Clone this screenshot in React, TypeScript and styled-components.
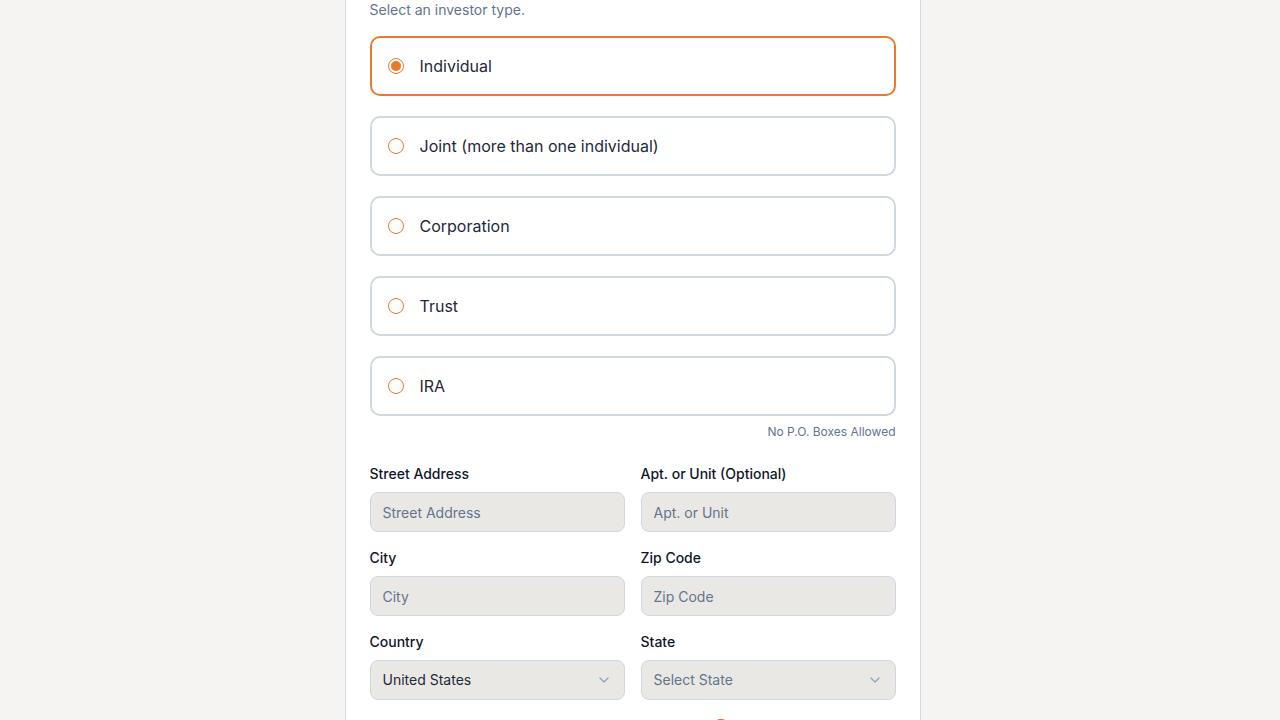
import React, { useState } from 'react';
import styled, { createGlobalStyle } from 'styled-components';
import { ChevronDown, Info } from 'lucide-react';

const GlobalStyle = createGlobalStyle`
  body {
    margin: 0;
    background: #f5f4f2;
    font-family: Inter, "Noto Sans", "Liberation Sans", sans-serif;
    color: #0f172a;
  }
  * {
    box-sizing: border-box;
  }
`;

// leaves room for the 15px scrollbar gutter seen in the reference
const Page = styled.div`
  display: flex;
  justify-content: center;
  padding: 0 15px 64px 0;
`;

const Card = styled.div`
  width: 576px;
  background: #ffffff;
  border-left: 1px solid #d5dbe3;
  border-right: 1px solid #d5dbe3;
  padding: 0 24px 40px;
  display: flex;
  flex-direction: column;
`;

const Hint = styled.div`
  font-size: 14px;
  line-height: 20px;
  color: #64748b;
  margin-bottom: 16px;
`;

const Options = styled.div`
  display: flex;
  flex-direction: column;
  gap: 20px;
`;

const Option = styled.label<{ $active: boolean }>`
  display: flex;
  align-items: center;
  gap: 16px;
  height: 60px;
  padding: 0 16px;
  border: 2px solid ${(p) => (p.$active ? '#ea7a2b' : '#cfd7e1')};
  border-radius: 10px;
  background: #ffffff;
  cursor: pointer;
  font-size: 16px;
  font-weight: 400;
  color: #1e293b;
`;

const Radio = styled.span<{ $active: boolean }>`
  width: 16px;
  height: 16px;
  border-radius: 50%;
  border: 1px solid #ea7a2b;
  display: flex;
  align-items: center;
  justify-content: center;
  flex-shrink: 0;

  &::after {
    content: '';
    width: 10px;
    height: 10px;
    border-radius: 50%;
    background: #ea7a2b;
    display: ${(p) => (p.$active ? 'block' : 'none')};
  }
`;

const Note = styled.div`
  text-align: right;
  font-size: 12px;
  line-height: 16px;
  color: #64748b;
  margin-top: 8px;
  margin-bottom: 24px;
`;

const Grid = styled.div`
  display: grid;
  grid-template-columns: 1fr 1fr;
  column-gap: 16px;
  row-gap: 16px;
`;

const Field = styled.div`
  display: flex;
  flex-direction: column;
  gap: 8px;
`;

const Label = styled.div`
  display: flex;
  align-items: center;
  gap: 6px;
  font-size: 14px;
  line-height: 20px;
  font-weight: 500;
  color: #0f172a;
`;

const Input = styled.input`
  height: 40px;
  width: 100%;
  padding: 0 12px;
  border: 1px solid #cfd7e1;
  border-radius: 8px;
  background: #eae8e5;
  font-family: inherit;
  font-size: 14px;
  color: #1e293b;
  outline: none;

  &::placeholder {
    color: #64748b;
  }
`;

const SelectBox = styled.button<{ $placeholder?: boolean }>`
  height: 40px;
  width: 100%;
  padding: 0 12px 1px;
  border: 1px solid #cfd7e1;
  border-radius: 8px;
  background: #eae8e5;
  font-family: inherit;
  font-size: 14px;
  color: ${(p) => (p.$placeholder ? '#64748b' : '#1e293b')};
  display: flex;
  align-items: center;
  justify-content: space-between;
  cursor: pointer;

  svg {
    color: #94a3b8;
  }
`;

const types = [
  'Individual',
  'Joint (more than one individual)',
  'Corporation',
  'Trust',
  'IRA',
];

export default function App() {
  const [selected, setSelected] = useState('Individual');

  return (
    <>
      <GlobalStyle />
      <Page>
        <Card>
          <Hint>Select an investor type.</Hint>
          <Options>
            {types.map((t) => (
              <Option key={t} $active={selected === t} onClick={() => setSelected(t)}>
                <Radio $active={selected === t} />
                {t}
              </Option>
            ))}
          </Options>
          <Note>No P.O. Boxes Allowed</Note>
          <Grid>
            <Field>
              <Label>Street Address</Label>
              <Input placeholder="Street Address" />
            </Field>
            <Field>
              <Label>Apt. or Unit (Optional)</Label>
              <Input placeholder="Apt. or Unit" />
            </Field>
            <Field>
              <Label>City</Label>
              <Input placeholder="City" />
            </Field>
            <Field>
              <Label>Zip Code</Label>
              <Input placeholder="Zip Code" />
            </Field>
            <Field>
              <Label>Country</Label>
              <SelectBox>
                United States
                <ChevronDown size={16} />
              </SelectBox>
            </Field>
            <Field>
              <Label>State</Label>
              <SelectBox $placeholder>
                Select State
                <ChevronDown size={16} />
              </SelectBox>
            </Field>
            <Field>
              <Label>Phone</Label>
              <Input placeholder="(555) 555-5555" />
            </Field>
            <Field>
              <Label>
                Birth Date
                <Info size={16} color="#ea7a2b" />
              </Label>
              <Input placeholder="MM/DD/YYYY" />
            </Field>
          </Grid>
        </Card>
      </Page>
    </>
  );
}
